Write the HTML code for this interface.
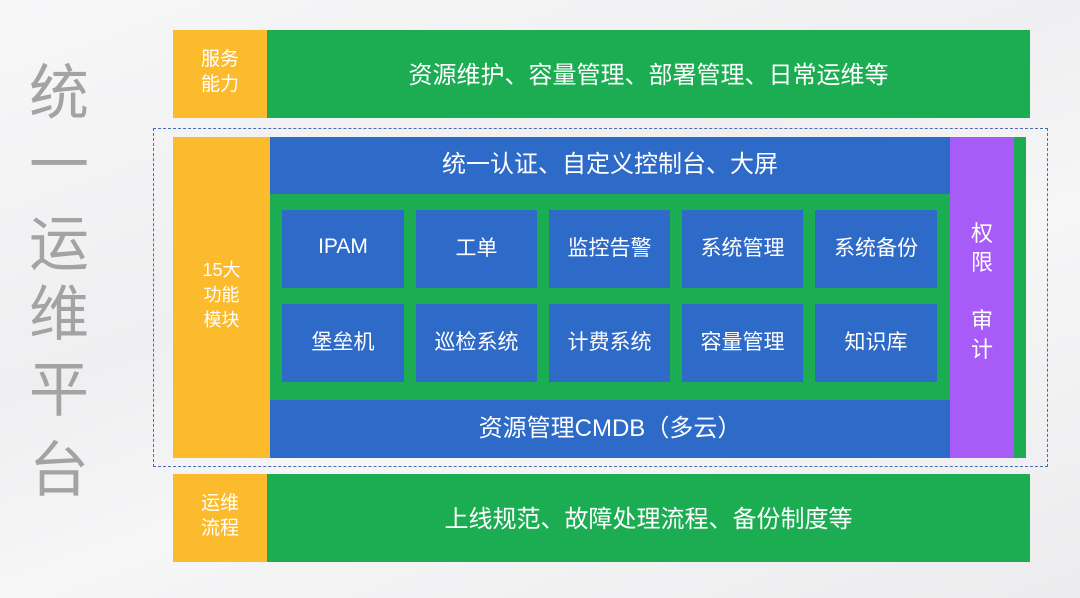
<!DOCTYPE html>
<html><head><meta charset="utf-8"><style>
*{margin:0;padding:0;box-sizing:border-box}
body{width:1080px;height:598px;overflow:hidden;position:relative;font-family:"Liberation Sans","Noto Sans CJK SC",sans-serif;background:linear-gradient(160deg,#f7f7f8 0%,#efeff1 40%,#f6f6f7 60%,#ececee 100%);color:#fff}
.a{position:absolute;display:flex;align-items:center;justify-content:center;text-align:center;padding-bottom:4px}
.or{background:#fbbb2c}.gr{background:#1cad52}.bl{background:#2e6ac8}.pu{background:#a85cf7}
.big{position:absolute;left:28px;width:62px;font-size:60px;color:#a3a3a3;text-align:center;line-height:60px}
.t{font-size:21px}
</style></head><body>
<div class="big" style="top:64px">统</div>
<div class="big" style="top:136px">一</div>
<div class="big" style="top:215px">运</div>
<div class="big" style="top:285px">维</div>
<div class="big" style="top:361px">平</div>
<div class="big" style="top:441px">台</div>

<div class="a or" style="left:173px;top:30px;width:94px;height:88px;font-size:19px;line-height:25px">服务<br>能力</div>
<div class="a gr" style="left:267px;top:30px;width:763px;height:88px;font-size:24px">资源维护、容量管理、部署管理、日常运维等</div>

<div style="position:absolute;left:153px;top:128px;width:895px;height:339px;border:1.5px dashed #4a6bb0"></div>
<div class="a or" style="left:173px;top:137px;width:97px;height:321px;font-size:18px;line-height:25px">15大<br>功能<br>模块</div>
<div class="a bl" style="left:270px;top:137px;width:680px;height:57px;font-size:24px;padding-bottom:8px">统一认证、自定义控制台、大屏</div>
<div class="gr" style="position:absolute;left:270px;top:194px;width:680px;height:206px"></div>
<div class="a bl" style="left:270px;top:400px;width:680px;height:58px;font-size:24px;padding-bottom:8px">资源管理CMDB（多云）</div>
<div class="a pu" style="left:950px;top:137px;width:64px;height:321px;font-size:22px;line-height:29px;padding-bottom:12px">权<br>限<br><br>审<br>计</div>
<div class="gr" style="position:absolute;left:1014px;top:137px;width:12px;height:321px"></div>

<div class="a bl t" style="left:282px;top:210px;width:122px;height:78px">IPAM</div>
<div class="a bl t" style="left:416px;top:210px;width:121px;height:78px">工单</div>
<div class="a bl t" style="left:549px;top:210px;width:121px;height:78px">监控告警</div>
<div class="a bl t" style="left:682px;top:210px;width:121px;height:78px">系统管理</div>
<div class="a bl t" style="left:815px;top:210px;width:122px;height:78px">系统备份</div>
<div class="a bl t" style="left:282px;top:304px;width:122px;height:78px">堡垒机</div>
<div class="a bl t" style="left:416px;top:304px;width:121px;height:78px">巡检系统</div>
<div class="a bl t" style="left:549px;top:304px;width:121px;height:78px">计费系统</div>
<div class="a bl t" style="left:682px;top:304px;width:121px;height:78px">容量管理</div>
<div class="a bl t" style="left:815px;top:304px;width:122px;height:78px">知识库</div>

<div class="a or" style="left:173px;top:474px;width:94px;height:88px;font-size:19px;line-height:25px">运维<br>流程</div>
<div class="a gr" style="left:267px;top:474px;width:763px;height:88px;font-size:24px">上线规范、故障处理流程、备份制度等</div>
</body></html>
